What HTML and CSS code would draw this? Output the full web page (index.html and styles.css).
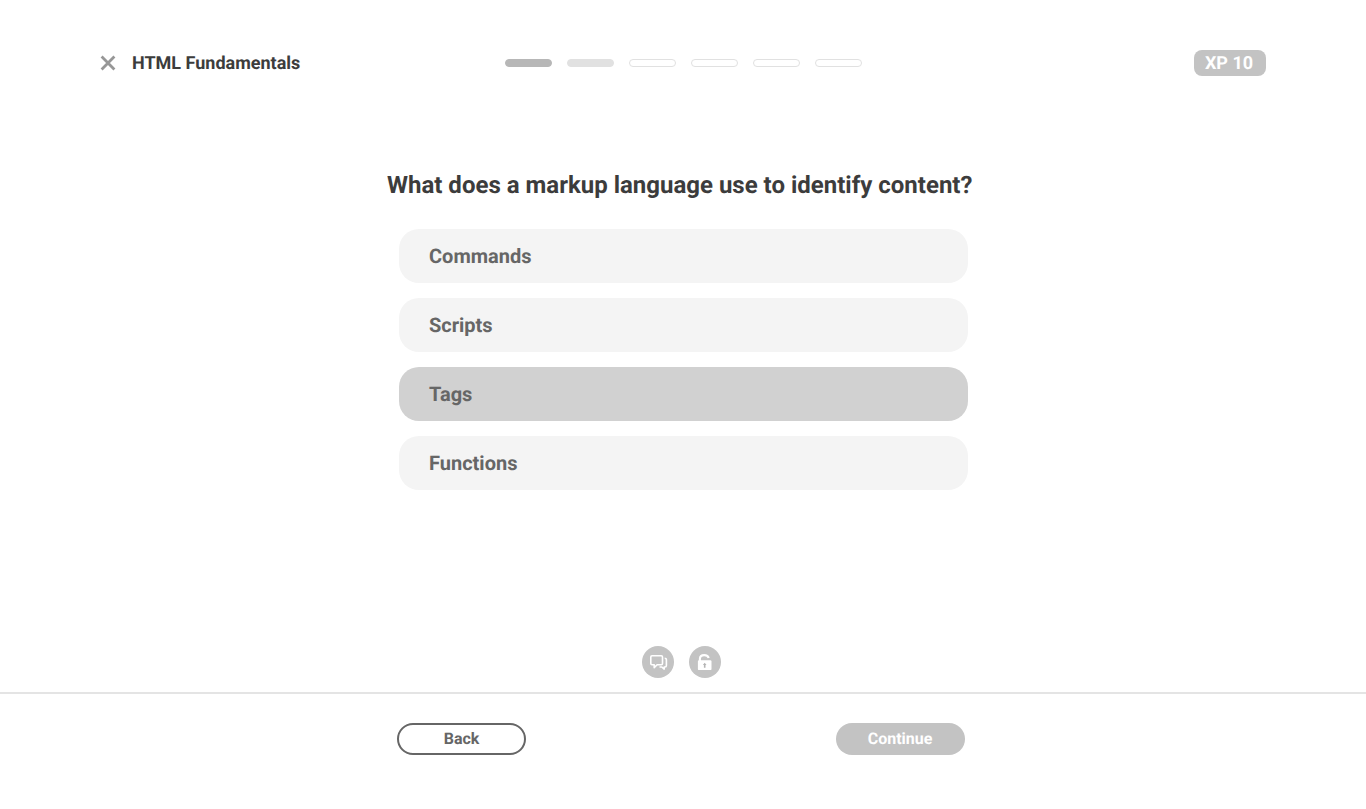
FILE: index.html
```html
<!DOCTYPE html>
<html lang="en">
<head>
<meta charset="utf-8">
<title>HTML Fundamentals</title>
<link rel="stylesheet" href="styles.css">
</head>
<body>
<div class="page">
  <header class="header">
    <div class="course">
      <svg class="close" viewBox="0 0 16 16" role="img" aria-label="Close"><path d="M1.6 1.6 14.4 14.4M14.4 1.6 1.6 14.4"/></svg>
      <span class="course-name">HTML Fundamentals</span>
    </div>
    <div class="progress">
      <span class="step step-done"></span>
      <span class="step step-current"></span>
      <span class="step"></span>
      <span class="step"></span>
      <span class="step"></span>
      <span class="step"></span>
    </div>
    <span class="xp">XP 10</span>
  </header>
  <main class="quiz">
    <h1 class="question">What does a markup language use to identify content?</h1>
    <div class="answers">
      <button class="answer">Commands</button>
      <button class="answer">Scripts</button>
      <button class="answer answer-selected">Tags</button>
      <button class="answer">Functions</button>
    </div>
  </main>
  <div class="tools">
    <button class="tool" aria-label="Comments">
      <svg viewBox="0 0 32 32"><path class="line" d="M10 9.7h9.3q1.2 0 1.2 1.2v6.6q0 1.2-1.2 1.2h-4.2l-2.9 2.9v-2.9H10q-1.2 0-1.2-1.2v-6.6q0-1.2 1.2-1.2z"/><path class="line" d="M22.7 12.3q1.7 0 1.7 1.3v6q0 1.4-1.4 1.4h-.8v2.1L19.8 21h-2.3"/></svg>
    </button>
    <button class="tool" aria-label="Unlock answer">
      <svg viewBox="0 0 32 32"><path class="shackle" d="M10.9 15v-2.2q0-3.7 4.3-3.7 3.7 0 4.5 2.9"/><rect class="body" x="8.9" y="14.2" width="13.6" height="9.9" rx="1.2"/><path class="keyhole" d="M15.7 16.8l1.8 2.1h-1v2.9h-1.6v-2.9h-1z"/></svg>
    </button>
  </div>
  <footer class="footer">
    <button class="action back">Back</button>
    <button class="action continue">Continue</button>
  </footer>
</div>
</body>
</html>
```
FILE: styles.css
```css
* { box-sizing: border-box; }
body {
  margin: 0;
  background: #fff;
  color: #3c3c3c;
  font-family: Roboto, sans-serif;
  font-weight: 700;
  text-rendering: geometricPrecision;
}
button {
  margin: 0;
  padding: 0;
  border: 0;
  font: inherit;
  text-rendering: inherit;
}
.page {
  display: flex;
  flex-direction: column;
  height: 809px;
  overflow: hidden;
}
.header {
  display: grid;
  grid-template-columns: 405px 357px 1fr;
  align-items: center;
  height: 26px;
  margin: 50px 100px 0;
}
.course { display: flex; align-items: center; gap: 16px; height: 26px; }
.close { width: 16px; height: 16px; }
.close path { fill: none; stroke: #979797; stroke-width: 2.8; }
.course-name { padding-top: 2px; font-size: 18px; line-height: 24px; }
.progress { display: flex; gap: 15px; }
.step {
  width: 47px;
  height: 8px;
  border: 1px solid #e1e1e1;
  border-radius: 4px;
}
.step-done { background: #b7b7b7; border-color: #b7b7b7; }
.step-current { background: #e1e1e1; }
.xp {
  justify-self: end;
  width: 72px;
  height: 26px;
  padding: 2px 2px 0 0;
  border-radius: 8px;
  background: #c3c3c3;
  color: #fff;
  font-size: 18px;
  line-height: 24px;
  text-align: center;
}
.quiz { margin: 93px 0 0 387px; }
.question {
  margin: 0;
  font-size: 24px;
  font-weight: 700;
  line-height: 32px;
  white-space: nowrap;
}
.answers {
  display: flex;
  flex-direction: column;
  gap: 15px;
  width: 569px;
  margin: 28px 0 0 12px;
}
.answer {
  height: 54px;
  padding: 0 30px;
  border-radius: 20px;
  background: #f4f4f4;
  color: #666;
  font-size: 20px;
  text-align: left;
}
.answer-selected { background: #d1d1d1; }
.tools {
  display: flex;
  gap: 15px;
  margin: auto 0 14px 642px;
}
.tool {
  width: 32px;
  height: 32px;
  border-radius: 50%;
  background: #c3c3c3;
}
.tool svg { display: block; width: 32px; height: 32px; }
.line { fill: none; stroke: #fff; stroke-width: 1.6; stroke-linejoin: round; }
.shackle { fill: none; stroke: #fff; stroke-width: 2.1; }
.body { fill: #fff; }
.keyhole { fill: #b4b4b4; }
.footer {
  display: flex;
  justify-content: space-between;
  height: 117px;
  padding: 29px 401px 0 397px;
  border-top: 2px solid #e4e4e4;
}
.action {
  width: 129px;
  height: 32px;
  padding-bottom: 2px;
  border-radius: 16px;
  font-size: 16px;
}
.back { border: 2px solid #666; background: #fff; color: #666; }
.continue { padding-right: 1px; background: #c3c3c3; color: #fff; }
```
